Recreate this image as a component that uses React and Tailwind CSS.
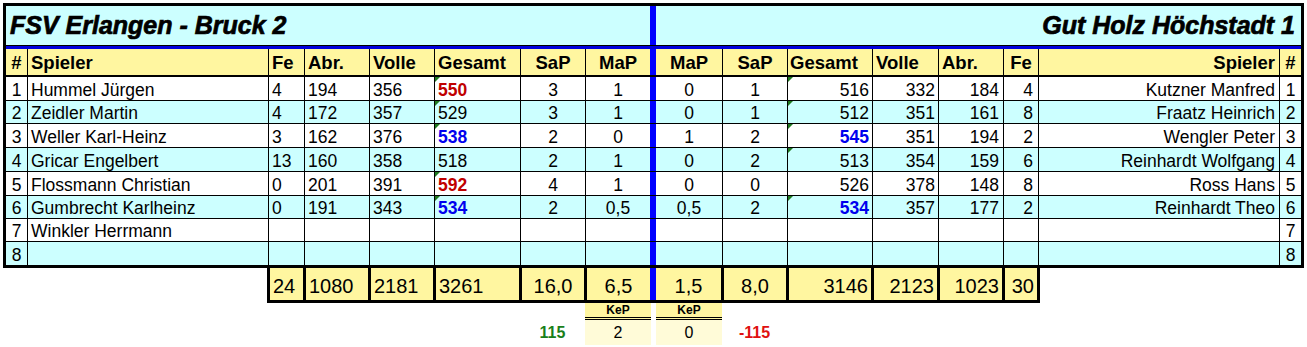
import React from "react";

const LW = ["w-[22px]", "w-[241px]", "w-[36px]", "w-[65px]", "w-[65px]", "w-[86px]", "w-[65px]", "w-[64px]"];
const RW = ["w-[67px]", "w-[65px]", "w-[85px]", "w-[66px]", "w-[65px]", "w-[35px]", "w-[241px]", "w-[21px]"];

const LA = [
  "justify-center",
  "justify-start pl-[3px]",
  "justify-start pl-[3px]",
  "justify-start pl-[3px]",
  "justify-start pl-[3px]",
  "justify-start pl-[3px]",
  "justify-center",
  "justify-center",
];
const RA = [
  "justify-center",
  "justify-center",
  "justify-end pr-[3px]",
  "justify-end pr-[3px]",
  "justify-end pr-[4px]",
  "justify-end pr-[5px]",
  "justify-end pr-[4px]",
  "justify-center",
];
const RHA = [
  "justify-center",
  "justify-center",
  "justify-start pl-[2px]",
  "justify-start pl-[3px]",
  "justify-start pl-[3px]",
  "justify-center",
  "justify-end pr-[4px]",
  "justify-center",
];

const ROWH = ["h-[24px]", "h-[23px]", "h-[24px]", "h-[24px]", "h-[24px]", "h-[23px]", "h-[23px]", "h-[23px]"];

const RED = "font-bold text-[#c00000]";
const BLUE = "font-bold text-[#0000ee]";

const left = [
  ["1", "Hummel Jürgen", "4", "194", "356", ["550", RED, true], "3", "1"],
  ["2", "Zeidler Martin", "4", "172", "357", ["529", "", true], "3", "1"],
  ["3", "Weller Karl-Heinz", "3", "162", "376", ["538", BLUE, true], "2", "0"],
  ["4", "Gricar Engelbert", "13", "160", "358", ["518", "", false], "2", "1"],
  ["5", "Flossmann Christian", "0", "201", "391", ["592", RED, true], "4", "1"],
  ["6", "Gumbrecht Karlheinz", "0", "191", "343", ["534", BLUE, true], "2", "0,5"],
  ["7", "Winkler Herrmann", "", "", "", ["", "", false], "", ""],
  ["8", "", "", "", "", ["", "", false], "", ""],
];

const right = [
  ["0", "1", ["516", "", true], "332", "184", "4", "Kutzner Manfred", "1"],
  ["0", "1", ["512", "", true], "351", "161", "8", "Fraatz Heinrich", "2"],
  ["1", "2", ["545", BLUE, true], "351", "194", "2", "Wengler Peter", "3"],
  ["0", "2", ["513", "", true], "354", "159", "6", "Reinhardt Wolfgang", "4"],
  ["0", "0", ["526", "", false], "378", "148", "8", "Ross Hans", "5"],
  ["0,5", "2", ["534", BLUE, true], "357", "177", "2", "Reinhardt Theo", "6"],
  ["", "", ["", "", false], "", "", "", "", "7"],
  ["", "", ["", "", false], "", "", "", "", "8"],
];

function Cell({ w, align, border, children, tri, items = "items-end" }) {
  return (
    <div
      className={`relative flex h-full shrink-0 ${items} ${w} ${align} ${border ? "border-r border-black" : ""}`}
    >
      {tri && (
        <span className="absolute left-0 top-0 h-0 w-0 border-r-[5px] border-t-[5px] border-r-transparent border-t-[#1f7a1f]" />
      )}
      {children}
    </div>
  );
}

function Val({ v }) {
  if (Array.isArray(v)) return <span className={`leading-[20px] ${v[1]}`}>{v[0]}</span>;
  return <span className="leading-[20px]">{v}</span>;
}

const Blue = () => <div className="h-full w-[6px] shrink-0 bg-[#0000ff]" />;

export default function App() {
  const lh = ["#", "Spieler", "Fe", "Abr.", "Volle", "Gesamt", "SaP", "MaP"];
  const rh = ["MaP", "SaP", "Gesamt", "Volle", "Abr.", "Fe", "Spieler", "#"];
  return (
    <div className="h-[347px] w-[1307px] bg-white pt-[3px] font-['Liberation_Sans',Arial,sans-serif] text-black">
      <div className="ml-[3px] w-[1301px] border-[3px] border-black">
        {/* title */}
        <div className="flex h-[39px] bg-[#ccffff] text-[25px] font-bold italic leading-[29px] [-webkit-text-stroke:0.7px_black]">
          <div className="flex h-full w-[644px] shrink-0 items-center pl-[4px]">FSV Erlangen - Bruck 2</div>
          <Blue />
          <div className="flex h-full w-[645px] shrink-0 items-center justify-end pr-[6px]">Gut Holz Höchstadt 1</div>
        </div>
        <div className="h-[1px] bg-black" />
        <div className="h-[3px] bg-[#0000dd]" />
        {/* header */}
        <div className="flex h-[28px] border-b-2 border-black bg-[#fff6a0] text-[18.5px] font-bold">
          {lh.map((t, i) => (
            <Cell key={"lh" + i} w={LW[i]} align={LA[i]} border={i < 7} items="items-center">
              <span className="leading-[21px]">{t}</span>
            </Cell>
          ))}
          <Blue />
          {rh.map((t, i) => (
            <Cell key={"rh" + i} w={RW[i]} align={RHA[i]} border={i < 7} items="items-center">
              <span className="leading-[21px]">{t}</span>
            </Cell>
          ))}
        </div>
        {/* rows */}
        {left.map((row, r) => (
          <div
            key={r}
            className={`flex ${ROWH[r]} ${r < 7 ? "border-b border-black" : ""} ${r % 2 ? "bg-[#ccffff]" : "bg-white"} text-[17.5px]`}
          >
            {row.map((v, i) => (
              <Cell key={"l" + i} w={LW[i]} align={LA[i]} border={i < 7} tri={i === 5 && v[2]}>
                <Val v={v} />
              </Cell>
            ))}
            <Blue />
            {right[r].map((v, i) => (
              <Cell key={"r" + i} w={RW[i]} align={RA[i]} border={i < 7} tri={i === 2 && v[2]}>
                <Val v={v} />
              </Cell>
            ))}
          </div>
        ))}
      </div>
      {/* totals */}
      <div className="ml-[267px] flex h-[35px] w-[773px] border-b-[3px] border-l-[3px] border-black bg-[#fff6a0] text-[20px]">
        <div className="flex h-full w-[36px] shrink-0 items-end border-r-[3px] border-black pb-[2px] pl-[3px] leading-[23px]">24</div>
        <div className="flex h-full w-[65px] shrink-0 items-end border-r-[3px] border-black pb-[2px] pl-[3px] leading-[23px]">1080</div>
        <div className="flex h-full w-[65px] shrink-0 items-end border-r-[3px] border-black pb-[2px] pl-[3px] leading-[23px]">2181</div>
        <div className="flex h-full w-[86px] shrink-0 items-end border-r-[3px] border-black pb-[2px] pl-[3px] leading-[23px]">3261</div>
        <div className="flex h-full w-[65px] shrink-0 items-end justify-center border-r-[3px] border-black pb-[2px] leading-[23px]">16,0</div>
        <div className="flex h-full w-[63px] shrink-0 items-end justify-center pb-[2px] leading-[23px]">6,5</div>
        <div className="h-full w-[6px] shrink-0 bg-[#0000ff]" />
        <div className="flex h-full w-[68px] shrink-0 items-end justify-center border-r-[3px] border-black pb-[2px] leading-[23px]">1,5</div>
        <div className="flex h-full w-[65px] shrink-0 items-end justify-center border-r-[3px] border-black pb-[2px] leading-[23px]">8,0</div>
        <div className="flex h-full w-[85px] shrink-0 items-end justify-end border-r-[3px] border-black pb-[2px] pr-[3px] leading-[23px]">3146</div>
        <div className="flex h-full w-[66px] shrink-0 items-end justify-end border-r-[3px] border-black pb-[2px] pr-[3px] leading-[23px]">2123</div>
        <div className="flex h-full w-[65px] shrink-0 items-end justify-end border-r-[3px] border-black pb-[2px] pr-[3px] leading-[23px]">1023</div>
        <div className="flex h-full w-[35px] shrink-0 items-end justify-end border-r-[3px] border-black pb-[2px] pr-[3px] leading-[23px]">30</div>
      </div>
      {/* KeP */}
      <div className="flex items-end">
        <div className="w-[520px] shrink-0" />
        <div className="flex h-[25px] w-[65px] shrink-0 items-center justify-center text-[16px] font-bold leading-[19px] text-[#1a7f1a]">115</div>
        <div className="flex w-[66px] shrink-0 flex-col">
          <div className="flex h-[17px] items-center justify-center border-b-[3px] border-double border-black bg-[#fff6a0] text-[12px] font-bold leading-[14px]">KeP</div>
          <div className="flex h-[25px] items-center justify-center bg-[#fffbd8] text-[16px] leading-[19px]">2</div>
        </div>
        <div className="w-[5px] shrink-0" />
        <div className="flex w-[66px] shrink-0 flex-col">
          <div className="flex h-[17px] items-center justify-center border-b-[3px] border-double border-black bg-[#fff6a0] text-[12px] font-bold leading-[14px]">KeP</div>
          <div className="flex h-[25px] items-center justify-center bg-[#fffbd8] text-[16px] leading-[19px]">0</div>
        </div>
        <div className="flex h-[25px] w-[65px] shrink-0 items-center justify-center text-[16px] font-bold leading-[19px] text-[#e01010]">-115</div>
      </div>
    </div>
  );
}
